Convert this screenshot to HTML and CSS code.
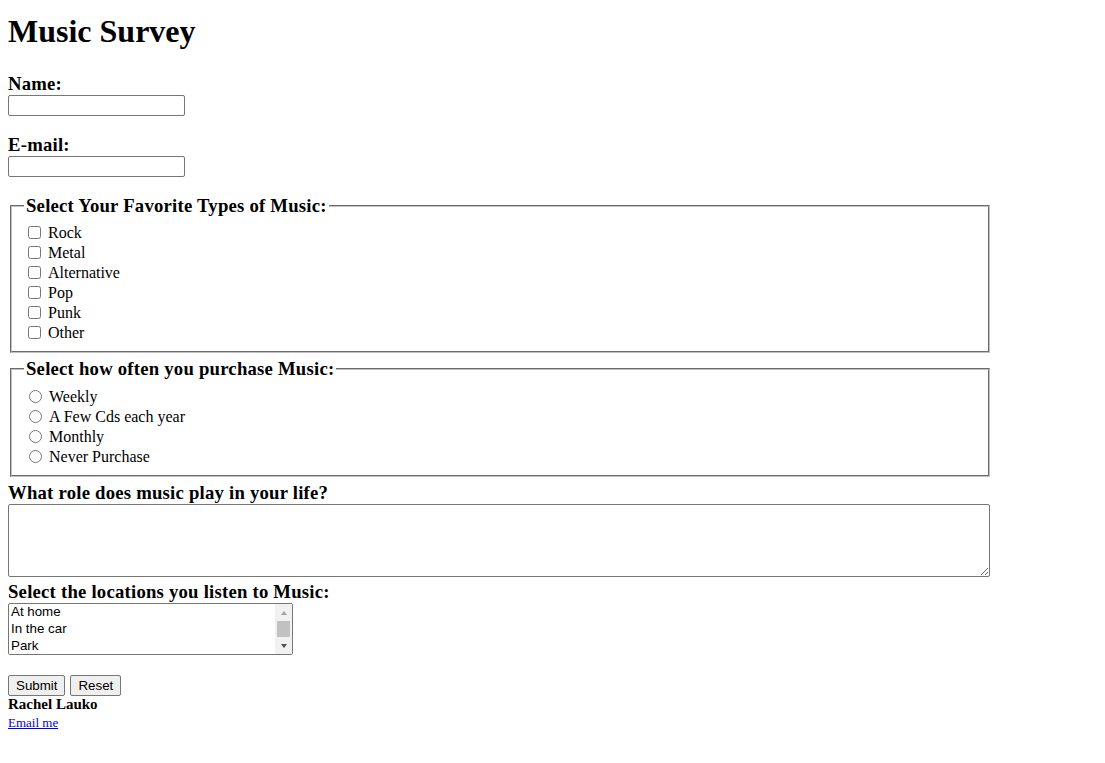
FILE: index.html
```html
<!DOCTYPE html>
<html lang="en">
<head>
    <meta charset="UTF-8">
    <meta name="viewport" content="width=device-width, initial-scale=1.0">
    <title>Music Survey</title>
    <link rel="stylesheet" href="styles.css">
</head>
<body>

    <h1 class="page-title">Music Survey</h1>

    <form class="survey" onsubmit="event.preventDefault()">
        <label class="field-label" for="name-input">Name:</label>
        <input class="text-input" id="name-input" type="text">

        <label class="field-label spaced" for="email-input">E-mail:</label>
        <input class="text-input" id="email-input" type="email">

        <fieldset class="group first-group">
            <legend class="group-title">Select Your Favorite Types of Music:</legend>
            <label class="choice"><input class="check" type="checkbox" name="genre" value="rock">Rock</label>
            <label class="choice"><input class="check" type="checkbox" name="genre" value="metal">Metal</label>
            <label class="choice"><input class="check" type="checkbox" name="genre" value="alternative">Alternative</label>
            <label class="choice"><input class="check" type="checkbox" name="genre" value="pop">Pop</label>
            <label class="choice"><input class="check" type="checkbox" name="genre" value="punk">Punk</label>
            <label class="choice"><input class="check" type="checkbox" name="genre" value="other">Other</label>
        </fieldset>

        <fieldset class="group second-group">
            <legend class="group-title">Select how often you purchase Music:</legend>
            <label class="choice"><input class="radio" type="radio" name="often" value="weekly">Weekly</label>
            <label class="choice"><input class="radio" type="radio" name="often" value="few">A Few Cds each year</label>
            <label class="choice"><input class="radio" type="radio" name="often" value="monthly">Monthly</label>
            <label class="choice"><input class="radio" type="radio" name="often" value="never">Never Purchase</label>
        </fieldset>

        <label class="field-label question" for="role-input">What role does music play in your life?</label>
        <textarea class="long-answer" id="role-input"></textarea>

        <label class="field-label locations-label" for="places">Select the locations you listen to Music:</label>
        <div class="places-box">
            <select class="places" id="places" size="3" multiple>
                <option>At home</option>
                <option>In the car</option>
                <option>Park</option>
                <option>At work</option>
            </select>
            
            <div class="fake-scroll" aria-hidden="true">
                <span class="arrow up"></span>
                <span class="thumb"></span>
                <span class="arrow down"></span>
            </div>
        </div>

        <div class="buttons">
            <button class="btn" type="submit">Submit</button>
            <button class="btn" type="reset">Reset</button>
        </div>
    </form>

    <div class="author">Rachel Lauko</div>
    <a class="mail-link" href="mailto:rachel@example.com">Email me</a>

</body>
</html>
```

FILE: styles.css
```css
body {
    margin: 8px;
    font-family: "Liberation Serif", "Times New Roman", serif;
    font-size: 16px;
    color: #000;
    background-color: #fff;
}

.page-title {
    margin: 5px 0 23px;
    font-size: 32px;
    line-height: 37px;
    font-weight: bold;
}

.survey {
    display: flex;
    flex-direction: column;
    align-items: flex-start;
}

.field-label {
    display: block;
    font-size: 18.72px;
    line-height: 22px;
    font-weight: bold;
    letter-spacing: 0.22px;
}

.field-label.spaced { margin-top: 18px; }
.field-label.question { margin-top: 5px; }
.field-label.locations-label { margin-top: 4px; }

.text-input {
    box-sizing: border-box;
    width: 177px;
    height: 21px;
    margin: 0;
    padding: 1px 2px;
    border: 1px solid #767676;
    border-radius: 2px;
    font-family: "Liberation Sans", Arial, sans-serif;
    font-size: 13.33px;
}

.group {
    box-sizing: border-box;
    width: 980px;
    margin: 0 2px;
    padding: 5.5px 12px 8.5px;
    border: 2px groove #c0c0c0;
}

.first-group { margin-top: 18px; }
.second-group { margin-top: 5px; padding-top: 6.5px; padding-bottom: 8.5px; }

.group-title {
    padding: 0 2px;
    font-size: 18.72px;
    line-height: 22px;
    font-weight: bold;
    letter-spacing: 0.22px;
}

.choice {
    display: flex;
    align-items: center;
    height: 20px;
}

.check {
    width: 13px;
    height: 13px;
    margin: 0 7px 0 4px;
}

.radio {
    width: 13px;
    height: 13px;
    margin: 0 7px 0 5px;
}

.long-answer {
    box-sizing: border-box;
    width: 982px;
    height: 73px;
    margin: 0;
    padding: 2px;
    border: 1px solid #767676;
    border-radius: 2px;
    font-family: "Liberation Mono", monospace;
    font-size: 13.33px;
}

.places-box {
    display: flex;
    box-sizing: border-box;
    width: 285px;
    height: 52px;
    border: 1px solid #767676;
    border-radius: 2px;
    overflow: hidden;
}

.places {
    flex: 1;
    min-width: 0;
    height: 100%;
    margin: 0;
    padding: 0;
    border: 0;
    outline: none;
    overflow: hidden;
    font-family: "Liberation Sans", Arial, sans-serif;
    font-size: 13.33px;
}

.places option {
    height: 17px;
    line-height: 17px;
    padding: 0 2px;
}

.fake-scroll {
    display: flex;
    flex-direction: column;
    width: 17px;
    background-color: #f1f1f1;
}

.arrow {
    display: flex;
    align-items: center;
    justify-content: center;
    height: 17px;
}

.arrow::before {
    content: "";
    border-left: 3.5px solid transparent;
    border-right: 3.5px solid transparent;
}

.arrow.up::before { border-bottom: 4px solid #a3a3a3; }
.arrow.down::before { border-top: 4px solid #505050; }

.thumb {
    flex: 1;
    margin: 0 2px;
    background-color: #c1c1c1;
}

.buttons {
    display: flex;
    gap: 5px;
    margin-top: 20px;
}

.btn {
    height: 21px;
    margin: 0;
    padding: 1px 7px;
    border: 1px solid #767676;
    border-radius: 2px;
    background-color: #efefef;
    font-family: "Liberation Sans", Arial, sans-serif;
    font-size: 13.33px;
    color: #000;
}

.author {
    font-size: 15px;
    line-height: 17px;
    font-weight: bold;
}

.mail-link {
    font-size: 13px;
    line-height: 15px;
    color: #0000ee;
}
```
